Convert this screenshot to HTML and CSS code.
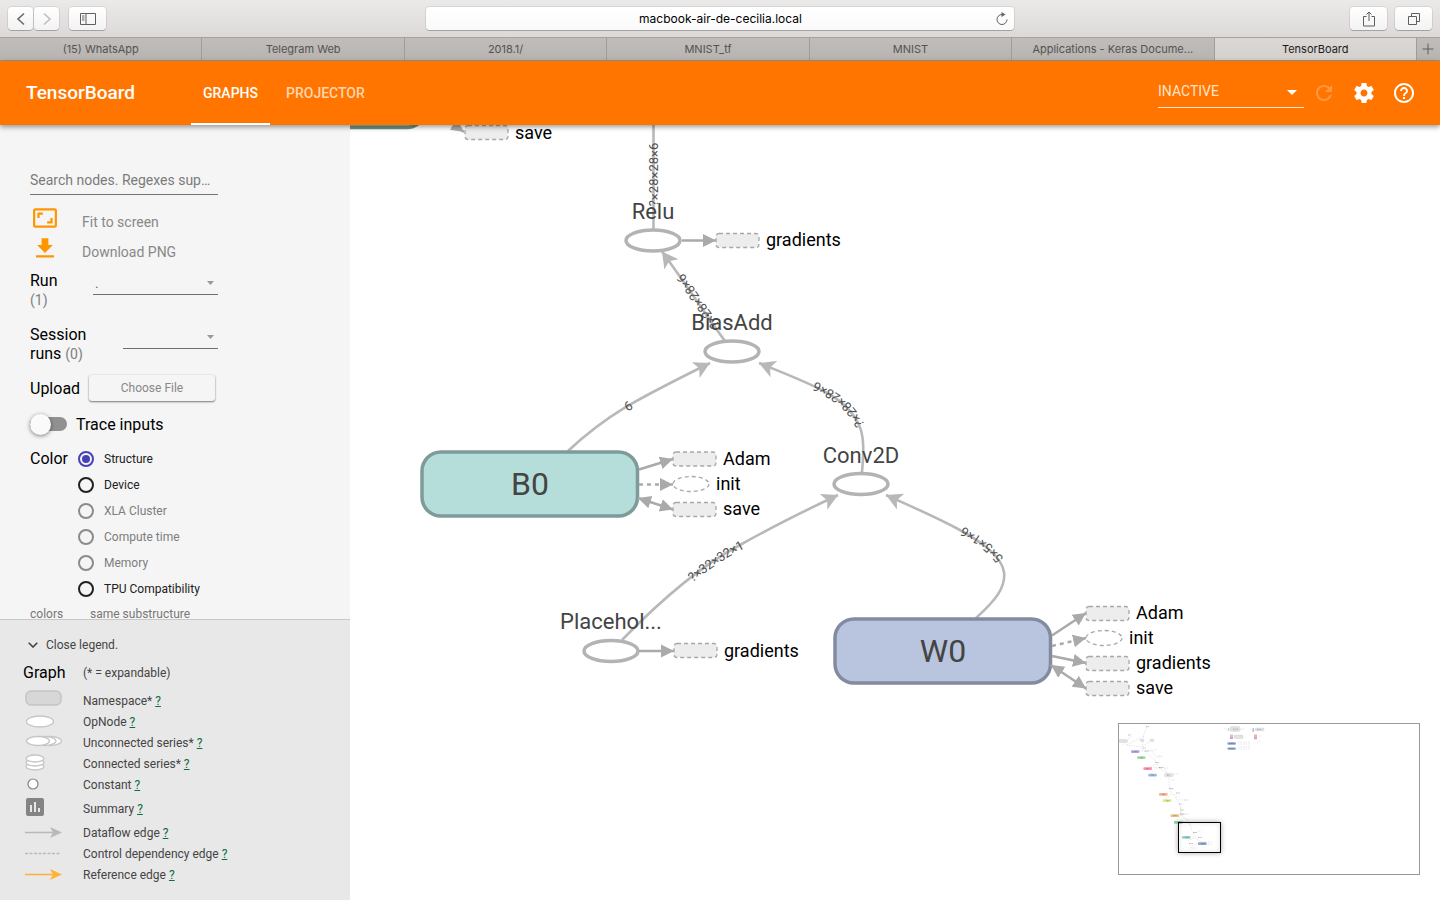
FILE: index.html
```html
<!DOCTYPE html>
<html lang="en">
<head>
<meta charset="utf-8">
<title>TensorBoard</title>
<link rel="stylesheet" href="styles.css">
</head>
<body>
<div class="window">
  <div class="toolbar">
    <div class="tool-group">
      <div class="nav-pair">
        <button class="tool-btn nav-btn" aria-label="Back"><svg width="10" height="14" viewBox="0 0 10 14"><path d="M8 1.5 2 7l6 5.500" class="line-dark"/></svg></button>
        <button class="tool-btn nav-btn" aria-label="Forward"><svg width="10" height="14" viewBox="0 0 10 14"><path d="M2 1.500 8 7l-6 5.500" class="line-light"/></svg></button>
      </div>
      <button class="tool-btn" aria-label="Show sidebar"><svg width="16" height="12" viewBox="0 0 16 12"><path d="M.5.500h15v11H.5zM6 .5v11M2 3h2.500M2 5h2.500M2 7h2.500" class="line-thin"/></svg></button>
    </div>
    <div class="address">
      <input class="address-input" type="text" value="macbook-air-de-cecilia.local" aria-label="Address">
      <button class="reload" aria-label="Reload"><svg width="14" height="14" viewBox="0 0 14 14"><path d="M7 2.500a5 5 0 1 0 5 5" class="line-thin"/><path d="M6.500 0v5l4-2.500z" fill="#666"/></svg></button>
    </div>
    <div class="tool-group tool-right">
      <button class="tool-btn" aria-label="Share"><svg width="12" height="16" viewBox="0 0 12 16"><path d="M3.500 5.500h-3v9.500h11V5.500h-3M6 10V1M3.500 3.500 6 1l2.500 2.500" class="line-thin"/></svg></button>
      <button class="tool-btn" aria-label="Show all tabs"><svg width="14" height="14" viewBox="0 0 14 14"><path d="M1.500 4.500h8v8h-8zM4.500 4V1.500h8v8H10" class="line-thin"/></svg></button>
    </div>
  </div>

  <div class="tabs">
    <button class="tab">(15) WhatsApp</button>
    <button class="tab">Telegram Web</button>
    <button class="tab">2018.1/</button>
    <button class="tab">MNIST_tf</button>
    <button class="tab">MNIST</button>
    <button class="tab">Applications - Keras Docume...</button>
    <button class="tab tab-active">TensorBoard</button>
    <button class="tab-add" aria-label="New tab"><svg width="12" height="12" viewBox="0 0 12 12"><path d="M6 .5v11M.5 6h11" class="line-thin"/></svg></button>
  </div>

  <header class="app-bar">
    <h1 class="brand">TensorBoard</h1>
    <nav class="app-tabs">
      <a class="app-tab app-tab-on" href="#graphs">GRAPHS</a>
      <a class="app-tab" href="#projector">PROJECTOR</a>
    </nav>
    <div class="app-actions">
      <div class="drop inactive-drop">
        <select class="drop-select inactive-select" aria-label="More dashboards"><option>INACTIVE</option></select>
        <svg class="drop-caret" width="10" height="5" viewBox="0 0 10 5"><path d="M0 0h10L5 5z" fill="#fff"/></svg>
      </div>
      <button class="icon-btn icon-faded" aria-label="Refresh"><svg width="24" height="24" viewBox="0 0 24 24"><path fill="#fff" d="M17.650 6.350C16.200 4.900 14.210 4 12 4c-4.420 0-7.990 3.580-7.990 8s3.570 8 7.990 8c3.730 0 6.840-2.550 7.730-6h-2.080c-.82 2.330-3.040 4-5.650 4-3.310 0-6-2.690-6-6s2.690-6 6-6c1.660 0 3.140.69 4.220 1.780L13 11h7V4l-2.350 2.350z"/></svg></button>
      <button class="icon-btn" aria-label="Settings"><svg width="24" height="24" viewBox="0 0 24 24"><path fill="#fff" d="M19.430 12.980c.04-.32.07-.64.07-.98s-.03-.66-.07-.98l2.110-1.650c.19-.15.24-.42.12-.64l-2-3.460c-.12-.22-.39-.3-.61-.22l-2.490 1c-.52-.4-1.080-.73-1.690-.98l-.38-2.650C14.460 2.180 14.250 2 14 2h-4c-.25 0-.46.18-.49.42l-.38 2.650c-.61.25-1.170.59-1.690.98l-2.490-1c-.23-.09-.49 0-.61.22l-2 3.460c-.13.22-.07.49.12.64l2.110 1.650c-.04.32-.07.65-.07.98s.03.66.07.98l-2.110 1.650c-.19.15-.24.42-.12.64l2 3.460c.12.22.39.3.61.22l2.490-1c.52.4 1.080.73 1.690.98l.38 2.650c.03.24.24.42.49.42h4c.25 0 .46-.18.49-.42l.38-2.650c.61-.25 1.170-.59 1.690-.98l2.490 1c.23.09.49 0 .61-.22l2-3.460c.12-.22.07-.49-.12-.64l-2.110-1.650zM12 15.500c-1.930 0-3.500-1.570-3.500-3.500s1.570-3.500 3.500-3.500 3.500 1.570 3.500 3.500-1.570 3.500-3.500 3.500z"/></svg></button>
      <button class="icon-btn" aria-label="Help"><svg width="24" height="24" viewBox="0 0 24 24"><path fill="#fff" d="M11 18h2v-2h-2v2zm1-16C6.480 2 2 6.480 2 12s4.480 10 10 10 10-4.480 10-10S17.520 2 12 2zm0 18c-4.410 0-8-3.590-8-8s3.590-8 8-8 8 3.590 8 8-3.590 8-8 8zm0-14c-2.210 0-4 1.790-4 4h2c0-1.100.9-2 2-2s2 .9 2 2c0 2-3 1.750-3 5h2c0-2.250 3-2.500 3-5 0-2.210-1.790-4-4-4z"/></svg></button>
    </div>
  </header>

  <main class="main">
    <aside class="sidebar">
      <div class="controls">
        <input class="search" type="text" placeholder="Search nodes. Regexes supported." aria-label="Search nodes">
        <div class="action-list">
          <button class="action"><svg class="action-icon" width="30" height="22" viewBox="-1.800 1.900 27.600 20.200"><path fill="#ff9500" d="M19 12h-2v3h-3v2h5v-5zM7 9h3V7H5v5h2V9zm14-6H3c-1.100 0-2 .9-2 2v14c0 1.100.9 2 2 2h18c1.100 0 2-.9 2-2V5c0-1.100-.9-2-2-2zm0 16.010H3V4.990h18v14.020z"/></svg>Fit to screen</button>
          <button class="action"><svg class="action-icon" width="30" height="22" viewBox="-1.300 1.800 26.600 19.500"><path fill="#ff9500" d="M19 9h-4V3H9v6H5l7 7 7-7zM4 18v2h16v-2H4z"/></svg>Download PNG</button>
        </div>
        <div class="field run-field">
          <label class="field-label" for="run">Run <span class="count">(1)</span></label>
          <div class="drop run-drop">
            <select class="drop-select" id="run"><option>.</option></select>
            <svg class="drop-caret" width="7" height="4" viewBox="0 0 7 4"><path d="M0 0h7L3.500 4z" fill="#999"/></svg>
          </div>
        </div>
        <div class="field session-field">
          <label class="field-label" for="session">Session runs <span class="count">(0)</span></label>
          <div class="drop session-drop">
            <select class="drop-select" id="session"><option></option></select>
            <svg class="drop-caret" width="7" height="4" viewBox="0 0 7 4"><path d="M0 0h7L3.500 4z" fill="#999"/></svg>
          </div>
        </div>
        <div class="upload">
          <label class="heading" for="choose">Upload</label>
          <button class="choose" id="choose">Choose File</button>
        </div>
        <label class="trace"><input class="toggle" type="checkbox"><span class="heading">Trace inputs</span></label>
        <div class="color">
          <span class="heading color-title" id="color-title">Color</span>
          <div class="radios" role="radiogroup" aria-labelledby="color-title">
            <label class="radio-row"><input class="radio" type="radio" name="color" checked>Structure</label>
            <label class="radio-row"><input class="radio" type="radio" name="color">Device</label>
            <label class="radio-row radio-off"><input class="radio" type="radio" name="color" disabled>XLA Cluster</label>
            <label class="radio-row radio-off"><input class="radio" type="radio" name="color" disabled>Compute time</label>
            <label class="radio-row radio-off"><input class="radio" type="radio" name="color" disabled>Memory</label>
            <label class="radio-row"><input class="radio" type="radio" name="color">TPU Compatibility</label>
          </div>
        </div>
        <div class="color-note"><span class="note-key">colors</span><span>same substructure</span></div>
      </div>

      <section class="legend">
        <button class="legend-toggle"><svg width="10" height="6" viewBox="0 0 10 6"><path d="M.7.700 5 5 9.300.7" fill="none" stroke="#444" stroke-width="1.600"/></svg>Close legend.</button>
        <div class="legend-row legend-head"><span class="heading legend-icon">Graph</span><span>(* = expandable)</span></div>
        <div class="legend-row"><svg class="legend-icon" height="22" viewBox="0 0 60 22"><rect x="3" y="1" width="35" height="14" rx="5" fill="#d7d7d7" stroke="#c4c4c4" stroke-width="1.500"/></svg><span>Namespace* <a href="#namespace">?</a></span></div>
        <div class="legend-row"><svg class="legend-icon" height="20" viewBox="0 0 60 20"><ellipse cx="17" cy="9.500" rx="13.500" ry="5.500" class="lg"/></svg><span>OpNode <a href="#opnode">?</a></span></div>
        <div class="legend-row"><svg class="legend-icon" height="20" viewBox="0 0 60 20"><ellipse cx="27" cy="8" rx="11.500" ry="4.500" class="lg"/><ellipse cx="21.500" cy="8" rx="11.500" ry="4.500" class="lg"/><ellipse cx="15" cy="8" rx="11.500" ry="4.500" class="lg"/></svg><span>Unconnected series* <a href="#unconnected">?</a></span></div>
        <div class="legend-row"><svg class="legend-icon" height="20" viewBox="0 0 60 20"><ellipse cx="12" cy="12.500" rx="9" ry="3.500" class="lg"/><ellipse cx="12" cy="8.500" rx="9" ry="3.500" class="lg"/><ellipse cx="12" cy="4.500" rx="9" ry="3.500" class="lg"/></svg><span>Connected series* <a href="#connected">?</a></span></div>
        <div class="legend-row"><svg class="legend-icon" height="20" viewBox="0 0 60 20"><circle cx="10" cy="9" r="5" fill="#fff" stroke="#858585" stroke-width="1.200"/></svg><span>Constant <a href="#constant">?</a></span></div>
        <div class="legend-row legend-summary"><svg class="legend-icon" height="24" viewBox="0 0 60 24"><path fill="#848484" d="M19 1H5a2 2 0 0 0-2 2v14c0 1.100.9 2 2 2h14a2 2 0 0 0 2-2V3a2 2 0 0 0-2-2zM9 15H7V8h2zm4 0h-2V5h2zm4 0h-2v-4h2z"/></svg><span>Summary <a href="#summary">?</a></span></div>
        <div class="legend-row"><svg class="legend-icon" height="20" viewBox="0 0 60 20"><path d="M2 9.500h28" stroke="#b9b9b9" stroke-width="1.500"/><path d="m39 9.500-12-5.500 3 5.500-3 5.500z" fill="#b9b9b9"/></svg><span>Dataflow edge <a href="#dataflow">?</a></span></div>
        <div class="legend-row"><svg class="legend-icon" height="20" viewBox="0 0 60 20"><path d="M2 9.500h36" stroke="#b9b9b9" stroke-width="1.500" stroke-dasharray="3 1.500"/></svg><span>Control dependency edge <a href="#control">?</a></span></div>
        <div class="legend-row"><svg class="legend-icon" height="20" viewBox="0 0 60 20"><path d="M2 9.500h28" stroke="#ffb233" stroke-width="1.500"/><path d="m39 9.500-12-5.500 3 5.500-3 5.500z" fill="#ffb233"/></svg><span>Reference edge <a href="#reference">?</a></span></div>
      </section>
    </aside>

    <section class="canvas" aria-label="Graph">
      <svg class="graph" xmlns="http://www.w3.org/2000/svg">
        <defs>
          <marker id="flow" markerUnits="userSpaceOnUse" markerWidth="20" markerHeight="20" refX="16" refY="10" orient="auto"><path d="M16 10 0 1.300 4 10 0 18.700z" fill="#b8b8b8"/></marker>
          <marker id="note" markerUnits="userSpaceOnUse" markerWidth="16" markerHeight="16" refX="13" refY="8" orient="auto-start-reverse"><path d="M13 8 0 1.500v13z" fill="#aaa"/></marker>
        </defs>
        <g transform="translate(-350 -125)">
          <path id="e-relu" class="edge" d="M653.500 229V120"/>
          <path id="e-bias" class="edge headed" d="M725 341C706 315 690 290 662 251.500"/>
          <path id="e-b0" class="edge headed" d="M568 451C610 412 640 398 710 363"/>
          <path id="e-conv" class="edge headed" d="M862 472C864 450 864 436 859 425C846 396 815 386 759 363"/>
          <path id="e-place" class="edge headed" d="M622 640C660 601 700 566 740 545C770 528 800 513 838 495"/>
          <path id="e-w0" class="edge headed" d="M976 618C996 600 1006 587 1004 572C1001 555 980 541 958 529C934 516 910 506 886 495"/>

          <rect x="209" y="64" width="216" height="63.500" rx="18" fill="#a9d6c0" stroke="#6d9382" stroke-width="3.500"/>
          <path class="note-edge" d="M430 108 464 132"/>
          <rect class="note-box" x="465" y="125.500" width="43" height="14" rx="3"/>
          <text class="note-text" x="515" y="139">save</text>

          <text class="op-text" x="653" y="219">Relu</text>
          <ellipse class="op" cx="653" cy="240.500" rx="27" ry="10.500"/>
          <path class="note-edge" d="M682 240.500H716"/>
          <rect class="note-box" x="716" y="233.500" width="43" height="14" rx="3"/>
          <text class="note-text" x="766" y="246">gradients</text>

          <text class="op-text" x="732" y="330">BiasAdd</text>
          <ellipse class="op" cx="732" cy="351.500" rx="27" ry="10.500"/>

          <text class="op-text" x="861" y="463">Conv2D</text>
          <ellipse class="op" cx="861" cy="484" rx="27" ry="10.500"/>

          <rect x="422" y="452" width="215.500" height="64" rx="19" fill="#b5dedb" stroke="#7e9b99" stroke-width="3.500"/>
          <text class="ns-text" x="530" y="495">B0</text>
          <path class="note-edge" d="M639 469.500 673 459"/>
          <path class="note-edge note-dash" d="M639 484.500H673"/>
          <path class="note-edge note-both" d="M638 498 673 509.500"/>
          <rect class="note-box" x="673" y="452" width="43" height="14" rx="3"/>
          <ellipse class="note-box note-op" cx="691" cy="484" rx="18" ry="7.500"/>
          <rect class="note-box" x="673" y="502.500" width="43" height="14" rx="3"/>
          <text class="note-text" x="723" y="465">Adam</text>
          <text class="note-text" x="716" y="490">init</text>
          <text class="note-text" x="723" y="515">save</text>

          <text class="op-text" x="611" y="629">Placehol...</text>
          <ellipse class="op" cx="611" cy="651" rx="27" ry="10.500"/>
          <path class="note-edge" d="M639 651H674"/>
          <rect class="note-box" x="674" y="643.500" width="43" height="14" rx="3"/>
          <text class="note-text" x="724" y="657">gradients</text>

          <rect x="835" y="619" width="215.500" height="64" rx="19" fill="#b9c4de" stroke="#838ba0" stroke-width="3.500"/>
          <text class="ns-text" x="943" y="662">W0</text>
          <path class="note-edge" d="M1052 635.500 1086 613"/>
          <path class="note-edge note-dash" d="M1052 646 1086 638"/>
          <path class="note-edge" d="M1052 656 1086 663"/>
          <path class="note-edge note-both" d="M1051 665 1086 688.500"/>
          <rect class="note-box" x="1086" y="606.500" width="43" height="14" rx="3"/>
          <ellipse class="note-box note-op" cx="1104" cy="638" rx="18" ry="7.500"/>
          <rect class="note-box" x="1086" y="656.500" width="43" height="14" rx="3"/>
          <rect class="note-box" x="1086" y="681.500" width="43" height="14" rx="3"/>
          <text class="note-text" x="1136" y="619">Adam</text>
          <text class="note-text" x="1129" y="644">init</text>
          <text class="note-text" x="1136" y="669">gradients</text>
          <text class="note-text" x="1136" y="694">save</text>

          <text class="edge-text"><textPath href="#e-relu" startOffset="50%">?×28×28×6</textPath></text>
          <text class="edge-text"><textPath href="#e-bias" startOffset="44%">?×28×28×6</textPath></text>
          <text class="edge-text"><textPath href="#e-b0" startOffset="45%">6</textPath></text>
          <text class="edge-text"><textPath href="#e-conv" startOffset="46%">?×28×28×6</textPath></text>
          <text class="edge-text"><textPath href="#e-place" startOffset="47%">?×32×32×1</textPath></text>
          <text class="edge-text"><textPath href="#e-w0" startOffset="46%">5×5×1×6</textPath></text>
        </g>
      </svg>

      <div class="minimap">
        <svg width="300" height="150" viewBox="0 0 300 150">
          <g fill="none" stroke="#ccc" stroke-width=".5" stroke-dasharray="1.500 1">
            <path d="M28 3 25 10 24 16 23 25 38 38 39 43 50 51V61l2 8 5 5 4 8 2 10 7 5 3 10 4 8 14 7M25 12l-18 9 16 2 10-7M12 12 4 21M20 27h5M25 27h8l4 6h6M38 40l-9 4 16-1 4 7M38 44l-7 6M40 44h9M52 70l-7 7M55 70l6 6h8M62 83l-1 8 9-1M63 91l-8 7M64 97l8 3M75 109l8-3M75 114l-7 3M80 118l-9 6h7"/>
            <path d="M31 26h7M39 32h5M47 50h12M52 56h5M51 65h5M65 76h4M60 90h9M84 118h10M84 120h10M105 4l6 3M121 5h4M119 18h12M119 20h12M119 23h12M119 25h12M131 5l4 2M138 19l4-2M140 12h3"/>
          </g>
          <g fill="#e2e2e2" stroke="#c9c9c9" stroke-width=".3">
            <rect x="0" y="15.500" width="8.500" height="3" rx="1"/><rect x="45.500" y="49.500" width="8.500" height="3.300" rx="1"/><rect x="111" y="2.500" width="10" height="5" rx="1.500"/><rect x="115" y="11" width="9" height="3.500" rx="1"/><rect x="136" y="4" width="9" height="3" rx="1"/><rect x="21" y="15" width="4" height="2.500" rx="1"/><rect x="31" y="15" width="4" height="2.500" rx="1"/>
          </g>
          <g stroke="#777" stroke-width=".5" stroke-dasharray="1 .4"><path d="M27 2.500h3M9 11h3M24 24h3M26 27h4M36 38.500h4M40 43.500h4M50 64.500h4M57 69h4M60 80h3M61 90h4M62 86h3M74 108.500h4M79 113.500h4M70 119.500h4M114 5.200h5M138 5.500h4M48 51.200h3"/></g>
          <rect x="12" y="26.200" width="8.500" height="2.700" rx="1" fill="#bd9fe0"/><rect x="18" y="32.300" width="8.500" height="2.700" rx="1" fill="#a5dca5"/><rect x="24.300" y="43.200" width="8.700" height="2.700" rx="1" fill="#ff8fb2"/><rect x="29.200" y="49.700" width="8.700" height="2.800" rx="1" fill="#a6b8df"/><rect x="40" y="69" width="8.700" height="2.800" rx="1" fill="#f9b194"/><rect x="43.700" y="75.300" width="8.700" height="2.800" rx="1" fill="#dfe98e"/><rect x="51.400" y="90.300" width="8.700" height="2.800" rx="1" fill="#ebc984"/><rect x="55" y="97" width="8.500" height="2.700" rx="1" fill="#90cfab"/><rect x="63" y="112" width="8.700" height="2.700" rx="1" fill="#95d4d1"/><rect x="79" y="118.300" width="8.700" height="2.700" rx="1" fill="#96a6ce"/><rect x="108.300" y="18.300" width="8.700" height="2.400" rx="1" fill="#93a2cf"/><rect x="108.300" y="23.400" width="8.700" height="2.400" rx="1" fill="#93a2cf"/>
          <g><rect x="111" y="10.500" width="3" height="2.500" fill="#edb4cc"/><rect x="111" y="13" width="3" height="2" fill="#b9a8dc"/><rect x="135" y="10.500" width="3" height="2.500" fill="#edb4a8"/><rect x="135" y="13" width="3" height="2.300" fill="#c8a8dc"/><rect x="109" y="4" width="1" height="3" fill="#b4dcc0"/><rect x="133.500" y="4" width="1.500" height="4" fill="#b4c0e4"/></g>
          <path d="M15 27.600h3M21 33.700h3M27 44.600h3M32 51.200h3M43 70.400h3M47 76.700h3M54 91.700h4M66 113.400h4M82 119.700h4M110 19.500h5M110 24.600h5" stroke="#555" stroke-width=".5" opacity=".7"/>
        </svg>
        <div class="viewfinder"></div>
      </div>
    </section>
  </main>
</div>
</body>
</html>
```

FILE: styles.css
```css
* { box-sizing: border-box; }
body { margin: 0; font-family: Roboto, "Liberation Sans", sans-serif; color: #000; background: #fff; }
button, input, select { font: inherit; color: inherit; margin: 0; padding: 0; border: 0; background: none; outline: 0; }
svg { display: block; flex: none; }

.window { height: 100vh; display: flex; flex-direction: column; overflow: hidden; }

/* browser chrome */
.toolbar { flex: none; height: 38px; padding: 0 8px; display: grid; grid-template-columns: 1fr minmax(200px, 588px) 1fr; align-items: center; background: linear-gradient(#ebeae9, #dcd9d7); border-bottom: 1px solid #a5a2a0; font-family: Inter, "Liberation Sans", sans-serif; }
.tool-group { display: flex; gap: 8px; }
.tool-right { justify-content: flex-end; }
.nav-pair { display: flex; gap: 1px; margin-right: 2px; }
.tool-btn { width: 37px; height: 23px; display: flex; align-items: center; justify-content: center; background: linear-gradient(#fff, #f3f3f3); border-radius: 4px; box-shadow: 0 0 0 1px rgba(0,0,0,.08), 0 1px 0 rgba(0,0,0,.2); }
.nav-btn { width: 25px; }
.line-dark, .line-light { fill: none; stroke: #6a6a6a; stroke-width: 1.6px; }
.line-light { stroke: #bfbfbf; }
.line-thin { fill: none; stroke: #5f5f5f; stroke-width: 1px; }
.address { height: 23px; display: flex; align-items: center; padding: 0 5px 0 20px; background: linear-gradient(#fff, #fafafa); border-radius: 4px; box-shadow: 0 0 0 1px rgba(0,0,0,.08), 0 1px 0 rgba(0,0,0,.2); }
.address-input { flex: 1; min-width: 0; font-size: 12px; text-align: center; }

.tabs { flex: none; height: 23px; display: flex; background: linear-gradient(#c1bdba, #b7b3b0); border-bottom: 1px solid #97938f; font-family: Inter, "Liberation Sans", sans-serif; font-size: 11px; }
.tab { flex: 1; min-width: 0; color: #555352; border-right: 1px solid #a09c99; white-space: nowrap; }
.tab-active { color: #1c1c1c; background: linear-gradient(#dcd8d6, #d4d0cd); }
.tab-add { width: 23px; display: flex; align-items: center; justify-content: center; }

/* app bar */
.app-bar { flex: none; height: 64px; padding: 0 24px 0 26px; display: flex; align-items: center; background: #ff7500; color: #fff; box-shadow: 0 2px 5px rgba(0,0,0,.4); position: relative; z-index: 2; }
.brand { margin: 0; width: 165px; font-size: 19px; font-weight: 500; line-height: 24px; }
.app-tabs { align-self: stretch; display: flex; gap: 4px; }
.app-tab { padding: 0 12px; line-height: 64px; font-size: 14px; font-weight: 500; color: #ffd5b0; text-decoration: none; border-bottom: 2px solid transparent; height: 64px; }
.app-tab-on { color: #fff; border-color: #fff; }
.app-actions { margin-left: auto; display: flex; align-items: center; gap: 16px; }
.icon-btn { width: 24px; height: 24px; }
.icon-faded { opacity: .25; }

.drop { position: relative; border-bottom: 1px solid #6e6e6e; height: 24px; }
.drop-select { appearance: none; width: 100%; height: 100%; padding-left: 2px; font-size: 14px; color: #666; }
.drop-caret { position: absolute; right: 4px; top: 10px; pointer-events: none; }
.inactive-drop { width: 146px; height: 30px; border-color: #ffe3cc; margin-right: -8px; }
.inactive-select { padding: 0 0 4px; color: #ffe3cc; }
.inactive-drop .drop-caret { right: 7px; top: 12px; }

/* sidebar */
.main { flex: 1; min-height: 0; display: flex; }
.sidebar { flex: none; width: 350px; display: flex; flex-direction: column; background: #f5f5f5; }
.controls { flex: 1; min-height: 0; overflow: hidden; padding: 41px 132px 0 30px; }
.heading, .field-label { font-size: 16px; line-height: 19px; }
.search { display: block; width: 100%; height: 29px; font-size: 14px; text-overflow: ellipsis; border-bottom: 1px solid #757575; }
.search::placeholder { color: #7b7b7b; opacity: 1; }
.action-list { margin-top: 12px; }
.action { display: flex; gap: 22px; font-size: 14px; line-height: 30px; color: #888; }
.field { display: flex; justify-content: space-between; align-items: flex-start; margin-top: 4px; }
.session-field { margin-top: 15px; }
.run-field .field-label { width: 40px; }
.session-field .field-label { width: 70px; }
.count { font-size: 14px; color: #808080; }
.run-drop { width: 125px; }
.session-drop { width: 95px; }
.upload { margin-top: 11px; display: flex; align-items: center; justify-content: space-between; }
.choose { width: 126px; height: 26px; margin-right: 3px; font-size: 12px; color: #888; border-radius: 3px; box-shadow: 0 1px 2px rgba(0,0,0,.5), 0 0 2px rgba(0,0,0,.1); background: #f5f5f5; }
.trace { margin-top: 13px; height: 20px; display: flex; align-items: center; gap: 9px; }
.toggle { appearance: none; width: 37px; height: 14px; border-radius: 7px; background: #919191; position: relative; }
.toggle::before { content: ""; position: absolute; left: 0; top: -3px; width: 21px; height: 21px; border-radius: 50%; background: #fafafa; box-shadow: 0 1px 4px rgba(0,0,0,.5); }
.color { margin-top: 12px; display: flex; align-items: flex-start; }
.color-title { width: 48px; line-height: 25px; }
.radio-row { height: 26px; display: flex; align-items: center; gap: 10px; font-size: 12px; color: #212121; white-space: nowrap; }
.radio { appearance: none; width: 16px; height: 16px; border: 2px solid #212121; border-radius: 50%; }
.radio:checked { border-color: #4741b8; background: #4741b8; background-clip: content-box; padding: 2px; }
.radio-off { color: #7d7d7d; }
.radio-off .radio { border-color: #8b8b8b; }
.color-note { display: flex; margin-top: 4px; font-size: 12px; line-height: 16px; color: #777; white-space: nowrap; }
.note-key { width: 60px; }

.legend { flex: none; padding: 15px 23px; border-top: 1px solid #c8c8c8; background: #e8e8e8; font-size: 12px; color: #444; }
.legend-toggle { display: flex; align-items: center; gap: 8px; height: 20px; padding-left: 5px; font-size: 12px; }
.legend-row { height: 21px; display: flex; align-items: center; }
.legend-head { height: 35px; }
.legend-summary { height: 27px; }
.legend-icon { width: 60px; }
.legend-head .heading { color: #000; }
.legend a { color: #0b6e3f; }
.lg { fill: #fff; stroke: #c6c6c6; stroke-width: 1.3px; }

/* graph */
.canvas { flex: 1; min-width: 0; position: relative; overflow: hidden; background: #fff; }
.graph { width: 100%; height: 100%; }
.edge { fill: none; stroke: #b8b8b8; stroke-width: 2.6px; }
.headed { marker-end: url(#flow); }
.op { fill: #fff; stroke: #b3b3b3; stroke-width: 3.5px; }
.op-text { font-size: 22px; fill: #444; text-anchor: middle; }
.ns-text { font-size: 32px; fill: #444; text-anchor: middle; }
.note-text { font-size: 18px; fill: #000; }
.note-edge { fill: none; stroke: #aaa; stroke-width: 2.5px; marker-end: url(#note); }
.note-dash { stroke-dasharray: 4 4; }
.note-both { marker-start: url(#note); }
.note-box { fill: #ededed; stroke: #a8a8a8; stroke-width: 1.3px; stroke-dasharray: 4 3; }
.note-op { fill: #fff; }
.edge-text { font-size: 13px; fill: #505050; text-anchor: middle; dominant-baseline: central; }

.minimap { position: absolute; right: 20px; bottom: 25px; border: 1px solid #999; background: #fff; }
.viewfinder { position: absolute; left: 59px; top: 98px; width: 43px; height: 31px; border: 1px solid #000; box-shadow: 0 0 5px rgba(0,0,0,.35), inset 0 0 5px rgba(0,0,0,.12); }
```
